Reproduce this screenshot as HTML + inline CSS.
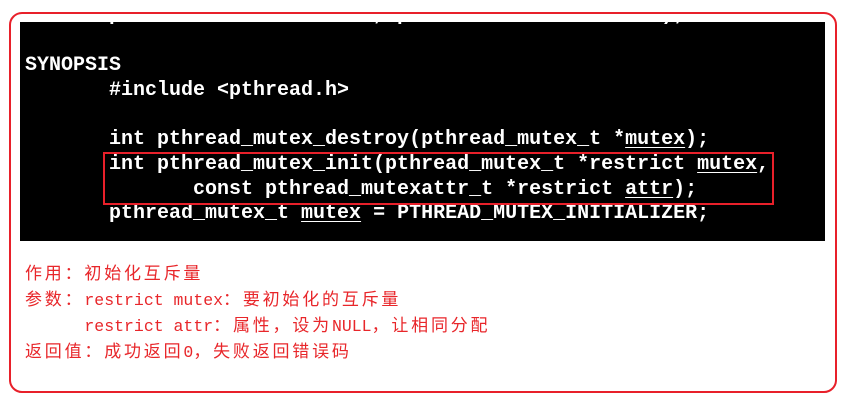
<!DOCTYPE html>
<html><head><meta charset="utf-8"><style>
body{margin:0;width:847px;height:402px;background:#fff;position:relative;overflow:hidden}
.outer{position:absolute;left:9px;top:12px;width:828px;height:381px;border:2.5px solid #e8202a;border-radius:13px;box-sizing:border-box}
.term{position:absolute;left:20px;top:22px;width:805px;height:219px;background:#000;overflow:hidden}
.t{position:absolute;left:5px;font:bold 20px/24px "Liberation Mono",monospace;color:#fff;white-space:pre}
u{text-decoration:underline;text-underline-offset:3px;text-decoration-thickness:1px}
.box{position:absolute;left:103px;top:152px;width:671px;height:53px;border:2.5px solid #e8202a;box-sizing:border-box}
.n{position:absolute;left:25px;color:#e8262a;font:16.5px "Liberation Mono",monospace;white-space:pre}
.c{font-family:"Noto Sans CJK SC",sans-serif;font-size:17px;letter-spacing:2.8px}
</style></head><body>
<div class="outer"></div>
<div class="term">
<div class="t" style="top:-18px">       pthread_mutex_t *mutex, pthread_mutex_t *mutex);</div>
<div class="t" style="top:32px">SYNOPSIS</div>
<div class="t" style="top:57px">       #include &lt;pthread.h&gt;</div>
<div class="t" style="top:106px">       int pthread_mutex_destroy(pthread_mutex_t *<u>mutex</u>);</div>
<div class="t" style="top:131px">       int pthread_mutex_init(pthread_mutex_t *restrict <u>mutex</u>,</div>
<div class="t" style="top:156px">              const pthread_mutexattr_t *restrict <u>attr</u>);</div>
<div class="t" style="top:180px">       pthread_mutex_t <u>mutex</u> = PTHREAD_MUTEX_INITIALIZER;</div>
</div>
<div class="box"></div>
<div class="n" style="top:259px"><span class="c">作用：初始化互斥量</span></div>
<div class="n" style="top:285px"><span class="c">参数：</span>restrict mutex<span class="c">：要初始化的互斥量</span></div>
<div class="n" style="top:311px">      restrict attr<span class="c">：属性，设为</span>NULL<span class="c">，让相同分配</span></div>
<div class="n" style="top:337px"><span class="c">返回值：成功返回</span>0<span class="c">，失败返回错误码</span></div>
</body></html>
